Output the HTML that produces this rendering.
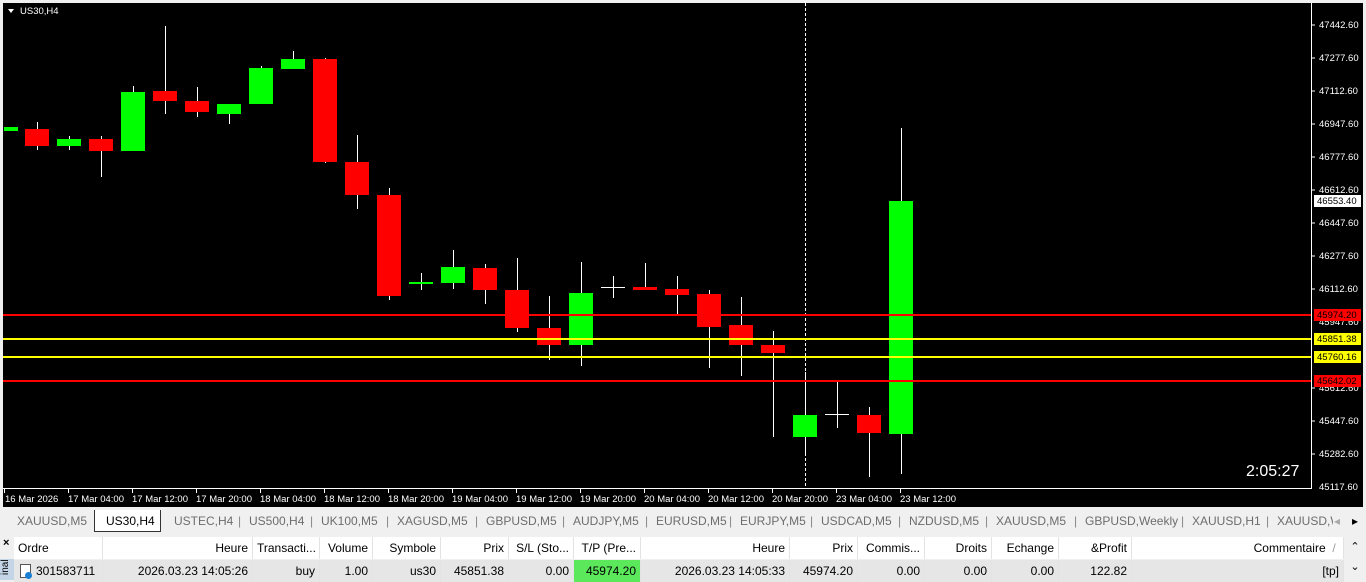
<!DOCTYPE html>
<html><head><meta charset="utf-8"><style>
*{margin:0;padding:0;box-sizing:border-box}
body{width:1366px;height:580px;overflow:hidden;background:#f0f0f0;font-family:"Liberation Sans",sans-serif;position:relative}
svg text{font-family:"Liberation Sans",sans-serif}
.tabs{position:absolute;left:0;top:510px;width:1366px;height:22px;background:#f0f0f0;font-size:12px;color:#6d6d6d}
.tabs span{position:absolute;top:4px;white-space:nowrap}
.tabs .sep{color:#888}
.act{position:absolute;left:94px;top:0;width:67px;height:22px;background:#fff;border:1px solid #333;border-top:none;color:#000;font-size:12px;padding:4px 0 0 11px}
.tbl{position:absolute;left:14px;top:537px;width:1330px;font-size:12px;color:#000}
.row{position:absolute;left:0;height:22px;width:1330px}
.c{position:absolute;top:0;height:22px;line-height:22px;padding:0 4px;white-space:nowrap;overflow:hidden;border-right:1px solid #e3e3e3}
.h{background:#fff}
.d{background:#e6e6e6}
</style></head><body>
<svg width="1366" height="510" style="position:absolute;left:0;top:0">
<rect x="0" y="0" width="1366" height="510" fill="#f0f0f0"/>
<rect x="3" y="3" width="1360" height="504" fill="#000"/>
<line x1="1311.5" y1="3" x2="1311.5" y2="489" stroke="#fff"/>
<line x1="3" y1="488.5" x2="1311" y2="488.5" stroke="#fff"/>
<path d="M8 9 l6 0 l-3 4z" fill="#fff"/>
<text x="20" y="14" fill="#fff" font-size="9.5">US30,H4</text>
<g stroke="#fff" stroke-dasharray="3,2"><line x1="805.5" y1="3" x2="805.5" y2="488"/></g>
<g stroke-width="1">
<line x1="37.5" y1="122" x2="37.5" y2="150" stroke="#fff"/>
<line x1="69.5" y1="136" x2="69.5" y2="150" stroke="#fff"/>
<line x1="101.5" y1="136" x2="101.5" y2="177" stroke="#fff"/>
<line x1="133.5" y1="86" x2="133.5" y2="151" stroke="#fff"/>
<line x1="165.5" y1="26" x2="165.5" y2="114" stroke="#fff"/>
<line x1="197.5" y1="87" x2="197.5" y2="117" stroke="#fff"/>
<line x1="229.5" y1="104" x2="229.5" y2="124" stroke="#fff"/>
<line x1="261.5" y1="66" x2="261.5" y2="104" stroke="#fff"/>
<line x1="293.5" y1="51" x2="293.5" y2="69" stroke="#fff"/>
<line x1="325.5" y1="58" x2="325.5" y2="163" stroke="#fff"/>
<line x1="357.5" y1="135" x2="357.5" y2="209" stroke="#fff"/>
<line x1="389.5" y1="188" x2="389.5" y2="300" stroke="#fff"/>
<line x1="421.5" y1="273" x2="421.5" y2="290" stroke="#fff"/>
<line x1="453.5" y1="250" x2="453.5" y2="289" stroke="#fff"/>
<line x1="485.5" y1="264" x2="485.5" y2="304" stroke="#fff"/>
<line x1="517.5" y1="258" x2="517.5" y2="332" stroke="#fff"/>
<line x1="549.5" y1="296" x2="549.5" y2="360" stroke="#fff"/>
<line x1="581.5" y1="262" x2="581.5" y2="366" stroke="#fff"/>
<line x1="613.5" y1="276" x2="613.5" y2="298" stroke="#fff"/>
<line x1="645.5" y1="263" x2="645.5" y2="290" stroke="#fff"/>
<line x1="677.5" y1="276" x2="677.5" y2="316" stroke="#fff"/>
<line x1="709.5" y1="290" x2="709.5" y2="368" stroke="#fff"/>
<line x1="741.5" y1="297" x2="741.5" y2="376" stroke="#fff"/>
<line x1="773.5" y1="331" x2="773.5" y2="437" stroke="#fff"/>
<line x1="805.5" y1="372" x2="805.5" y2="453" stroke="#fff"/>
<line x1="837.5" y1="380" x2="837.5" y2="428" stroke="#fff"/>
<line x1="869.5" y1="407" x2="869.5" y2="477" stroke="#fff"/>
<line x1="901.5" y1="128" x2="901.5" y2="474" stroke="#fff"/>
</g>
<g>
<rect x="4" y="127" width="14" height="4" fill="#00ff00"/>
<rect x="25" y="129" width="24" height="17" fill="#ff0000"/>
<rect x="57" y="139" width="24" height="7" fill="#00ff00"/>
<rect x="89" y="139" width="24" height="12" fill="#ff0000"/>
<rect x="121" y="92" width="24" height="59" fill="#00ff00"/>
<rect x="153" y="91" width="24" height="10" fill="#ff0000"/>
<rect x="185" y="101" width="24" height="11" fill="#ff0000"/>
<rect x="217" y="104" width="24" height="10" fill="#00ff00"/>
<rect x="249" y="68" width="24" height="36" fill="#00ff00"/>
<rect x="281" y="59" width="24" height="10" fill="#00ff00"/>
<rect x="313" y="59" width="24" height="103" fill="#ff0000"/>
<rect x="345" y="162" width="24" height="33" fill="#ff0000"/>
<rect x="377" y="195" width="24" height="101" fill="#ff0000"/>
<rect x="409" y="282" width="24" height="2" fill="#00ff00"/>
<rect x="441" y="267" width="24" height="16" fill="#00ff00"/>
<rect x="473" y="268" width="24" height="22" fill="#ff0000"/>
<rect x="505" y="290" width="24" height="38" fill="#ff0000"/>
<rect x="537" y="328" width="24" height="17" fill="#ff0000"/>
<rect x="569" y="293" width="24" height="52" fill="#00ff00"/>
<rect x="601" y="287" width="24" height="1" fill="#fff"/>
<rect x="633" y="287" width="24" height="3" fill="#ff0000"/>
<rect x="665" y="289" width="24" height="6" fill="#ff0000"/>
<rect x="697" y="294" width="24" height="33" fill="#ff0000"/>
<rect x="729" y="325" width="24" height="20" fill="#ff0000"/>
<rect x="761" y="345" width="24" height="8" fill="#ff0000"/>
<rect x="793" y="415" width="24" height="22" fill="#00ff00"/>
<rect x="825" y="414" width="24" height="1" fill="#fff"/>
<rect x="857" y="415" width="24" height="18" fill="#ff0000"/>
<rect x="889" y="201" width="24" height="233" fill="#00ff00"/>
</g>
<g stroke-width="2">
<line x1="3" y1="315" x2="1311" y2="315" stroke="#ff0000"/>
<line x1="3" y1="339" x2="1311" y2="339" stroke="#ffff00"/>
<line x1="3" y1="357" x2="1311" y2="357" stroke="#ffff00"/>
<line x1="3" y1="381" x2="1311" y2="381" stroke="#ff0000"/>
</g>
<g fill="#fff" font-size="9.5">
<text x="1319" y="28">47442.60</text><text x="1319" y="61">47277.60</text><text x="1319" y="94">47112.60</text>
<text x="1319" y="127">46947.60</text><text x="1319" y="160">46777.60</text><text x="1319" y="193">46612.60</text>
<text x="1319" y="226">46447.60</text>
<text x="1319" y="259">46277.60</text><text x="1319" y="292">46112.60</text><text x="1319" y="325">45947.60</text>
<text x="1319" y="391">45612.60</text><text x="1319" y="424">45447.60</text><text x="1319" y="457">45282.60</text>
<text x="1319" y="490">45117.60</text>
</g>
<g stroke="#fff"><line x1="1311" y1="25" x2="1315" y2="25"/><line x1="1311" y1="58" x2="1315" y2="58"/><line x1="1311" y1="91" x2="1315" y2="91"/><line x1="1311" y1="124" x2="1315" y2="124"/><line x1="1311" y1="157" x2="1315" y2="157"/><line x1="1311" y1="190" x2="1315" y2="190"/><line x1="1311" y1="223" x2="1315" y2="223"/><line x1="1311" y1="256" x2="1315" y2="256"/><line x1="1311" y1="289" x2="1315" y2="289"/><line x1="1311" y1="388" x2="1315" y2="388"/><line x1="1311" y1="421" x2="1315" y2="421"/><line x1="1311" y1="454" x2="1315" y2="454"/></g>
<rect x="1314" y="195" width="47" height="12" fill="#fff"/><text x="1317" y="204" fill="#000" font-size="9.5">46553.40</text>
<rect x="1314" y="309" width="47" height="12" fill="#ff0000"/><text x="1317" y="318" fill="#000" font-size="9.5">45974.20</text>
<rect x="1314" y="333" width="47" height="12" fill="#ffff00"/><text x="1317" y="342" fill="#000" font-size="9.5">45851.38</text>
<rect x="1314" y="351" width="47" height="12" fill="#ffff00"/><text x="1317" y="360" fill="#000" font-size="9.5">45760.16</text>
<rect x="1314" y="375" width="47" height="12" fill="#ff0000"/><text x="1317" y="384" fill="#000" font-size="9.5">45642.02</text>
<text x="1246" y="476" fill="#fff" font-size="16">2:05:27</text>
<g fill="#fff" font-size="9.5">
<text x="5" y="502">16 Mar 2026</text><text x="68" y="502">17 Mar 04:00</text><text x="132" y="502">17 Mar 12:00</text>
<text x="196" y="502">17 Mar 20:00</text><text x="260" y="502">18 Mar 04:00</text><text x="324" y="502">18 Mar 12:00</text>
<text x="388" y="502">18 Mar 20:00</text><text x="452" y="502">19 Mar 04:00</text><text x="516" y="502">19 Mar 12:00</text>
<text x="580" y="502">19 Mar 20:00</text><text x="644" y="502">20 Mar 04:00</text><text x="708" y="502">20 Mar 12:00</text>
<text x="772" y="502">20 Mar 20:00</text><text x="836" y="502">23 Mar 04:00</text><text x="900" y="502">23 Mar 12:00</text>
</g>
<g stroke="#fff"><line x1="4.5" y1="488" x2="4.5" y2="493"/><line x1="68.5" y1="488" x2="68.5" y2="493"/><line x1="132.5" y1="488" x2="132.5" y2="493"/><line x1="196.5" y1="488" x2="196.5" y2="493"/><line x1="260.5" y1="488" x2="260.5" y2="493"/><line x1="324.5" y1="488" x2="324.5" y2="493"/><line x1="388.5" y1="488" x2="388.5" y2="493"/><line x1="452.5" y1="488" x2="452.5" y2="493"/><line x1="516.5" y1="488" x2="516.5" y2="493"/><line x1="580.5" y1="488" x2="580.5" y2="493"/><line x1="644.5" y1="488" x2="644.5" y2="493"/><line x1="708.5" y1="488" x2="708.5" y2="493"/><line x1="772.5" y1="488" x2="772.5" y2="493"/><line x1="836.5" y1="488" x2="836.5" y2="493"/><line x1="900.5" y1="488" x2="900.5" y2="493"/></g>
</svg>
<div class="tabs">
<span style="left:17px">XAUUSD,M5</span>
<span style="left:174px">USTEC,H4</span><span class="sep" style="left:238px">|</span>
<span style="left:249px">US500,H4</span><span class="sep" style="left:310px">|</span>
<span style="left:321px">UK100,M5</span><span class="sep" style="left:386px">|</span>
<span style="left:397px">XAGUSD,M5</span><span class="sep" style="left:475px">|</span>
<span style="left:486px">GBPUSD,M5</span><span class="sep" style="left:562px">|</span>
<span style="left:573px">AUDJPY,M5</span><span class="sep" style="left:645px">|</span>
<span style="left:656px">EURUSD,M5</span><span class="sep" style="left:729px">|</span>
<span style="left:740px">EURJPY,M5</span><span class="sep" style="left:810px">|</span>
<span style="left:821px">USDCAD,M5</span><span class="sep" style="left:898px">|</span>
<span style="left:909px">NZDUSD,M5</span><span class="sep" style="left:985px">|</span>
<span style="left:996px">XAUUSD,M5</span><span class="sep" style="left:1074px">|</span>
<span style="left:1085px">GBPUSD,Weekly</span><span class="sep" style="left:1181px">|</span>
<span style="left:1192px">XAUUSD,H1</span><span class="sep" style="left:1266px">|</span>
<span style="left:1277px;width:56px;overflow:hidden">XAUUSD,W</span>
<span style="left:1334px;color:#aaa">◂</span><span style="left:1352px;color:#000">▸</span>
<div class="act">US30,H4</div>
</div>
<div style="position:absolute;left:0;top:537px;width:14px;height:43px;background:#f0f0f0"><div style="font-size:11px;font-weight:bold;padding-left:3px">×</div><div style="position:absolute;left:0;top:22px;width:14px;height:21px;background:#c5d5e8;font-size:10px;writing-mode:vertical-rl;transform:rotate(180deg);text-align:right">inal</div></div>
<div class="tbl">
<div class="row h" style="top:0">
<div class="c" style="left:0;width:89px">Ordre</div>
<div class="c" style="left:89px;width:150px;text-align:right">Heure</div>
<div class="c" style="left:239px;width:67px">Transacti...</div>
<div class="c" style="left:306px;width:53px;text-align:right">Volume</div>
<div class="c" style="left:359px;width:68px;text-align:right">Symbole</div>
<div class="c" style="left:427px;width:68px;text-align:right">Prix</div>
<div class="c" style="left:495px;width:65px;text-align:right">S/L (Sto...</div>
<div class="c" style="left:560px;width:67px;text-align:right">T/P (Pre...</div>
<div class="c" style="left:627px;width:149px;text-align:right">Heure</div>
<div class="c" style="left:776px;width:68px;text-align:right">Prix</div>
<div class="c" style="left:844px;width:67px;text-align:right">Commis...</div>
<div class="c" style="left:911px;width:67px;text-align:right">Droits</div>
<div class="c" style="left:978px;width:67px;text-align:right">Echange</div>
<div class="c" style="left:1045px;width:73px;text-align:right">&amp;Profit</div>
<div class="c" style="left:1118px;width:212px;text-align:right">Commentaire&nbsp; <span style="color:#999">/</span>&nbsp;</div>
</div>
<div class="row d" style="top:23px">
<div class="c" style="left:0;width:89px;padding-left:22px">301583711</div>
<div style="position:absolute;left:6px;top:4px;width:11px;height:14px;border:1px solid #555;background:#fff"></div><div style="position:absolute;left:11px;top:12px;width:7px;height:7px;border-radius:50%;background:#1a7fd4"></div>
<div class="c" style="left:89px;width:150px;text-align:right">2026.03.23 14:05:26</div>
<div class="c" style="left:239px;width:67px;text-align:right">buy</div>
<div class="c" style="left:306px;width:53px;text-align:right">1.00</div>
<div class="c" style="left:359px;width:68px;text-align:right">us30</div>
<div class="c" style="left:427px;width:68px;text-align:right">45851.38</div>
<div class="c" style="left:495px;width:65px;text-align:right">0.00</div>
<div class="c" style="left:560px;width:67px;text-align:right;background:#5be85b">45974.20</div>
<div class="c" style="left:627px;width:149px;text-align:right">2026.03.23 14:05:33</div>
<div class="c" style="left:776px;width:68px;text-align:right">45974.20</div>
<div class="c" style="left:844px;width:67px;text-align:right">0.00</div>
<div class="c" style="left:911px;width:67px;text-align:right">0.00</div>
<div class="c" style="left:978px;width:67px;text-align:right">0.00</div>
<div class="c" style="left:1045px;width:73px;text-align:right">122.82</div>
<div class="c" style="left:1118px;width:212px;text-align:right">[tp]</div>
</div>
</div>
<div style="position:absolute;left:1344px;top:537px;width:22px;height:43px;background:#f0f0f0;font-size:11px;text-align:center;line-height:20px">⌃<br>⌄</div>
</body></html>
